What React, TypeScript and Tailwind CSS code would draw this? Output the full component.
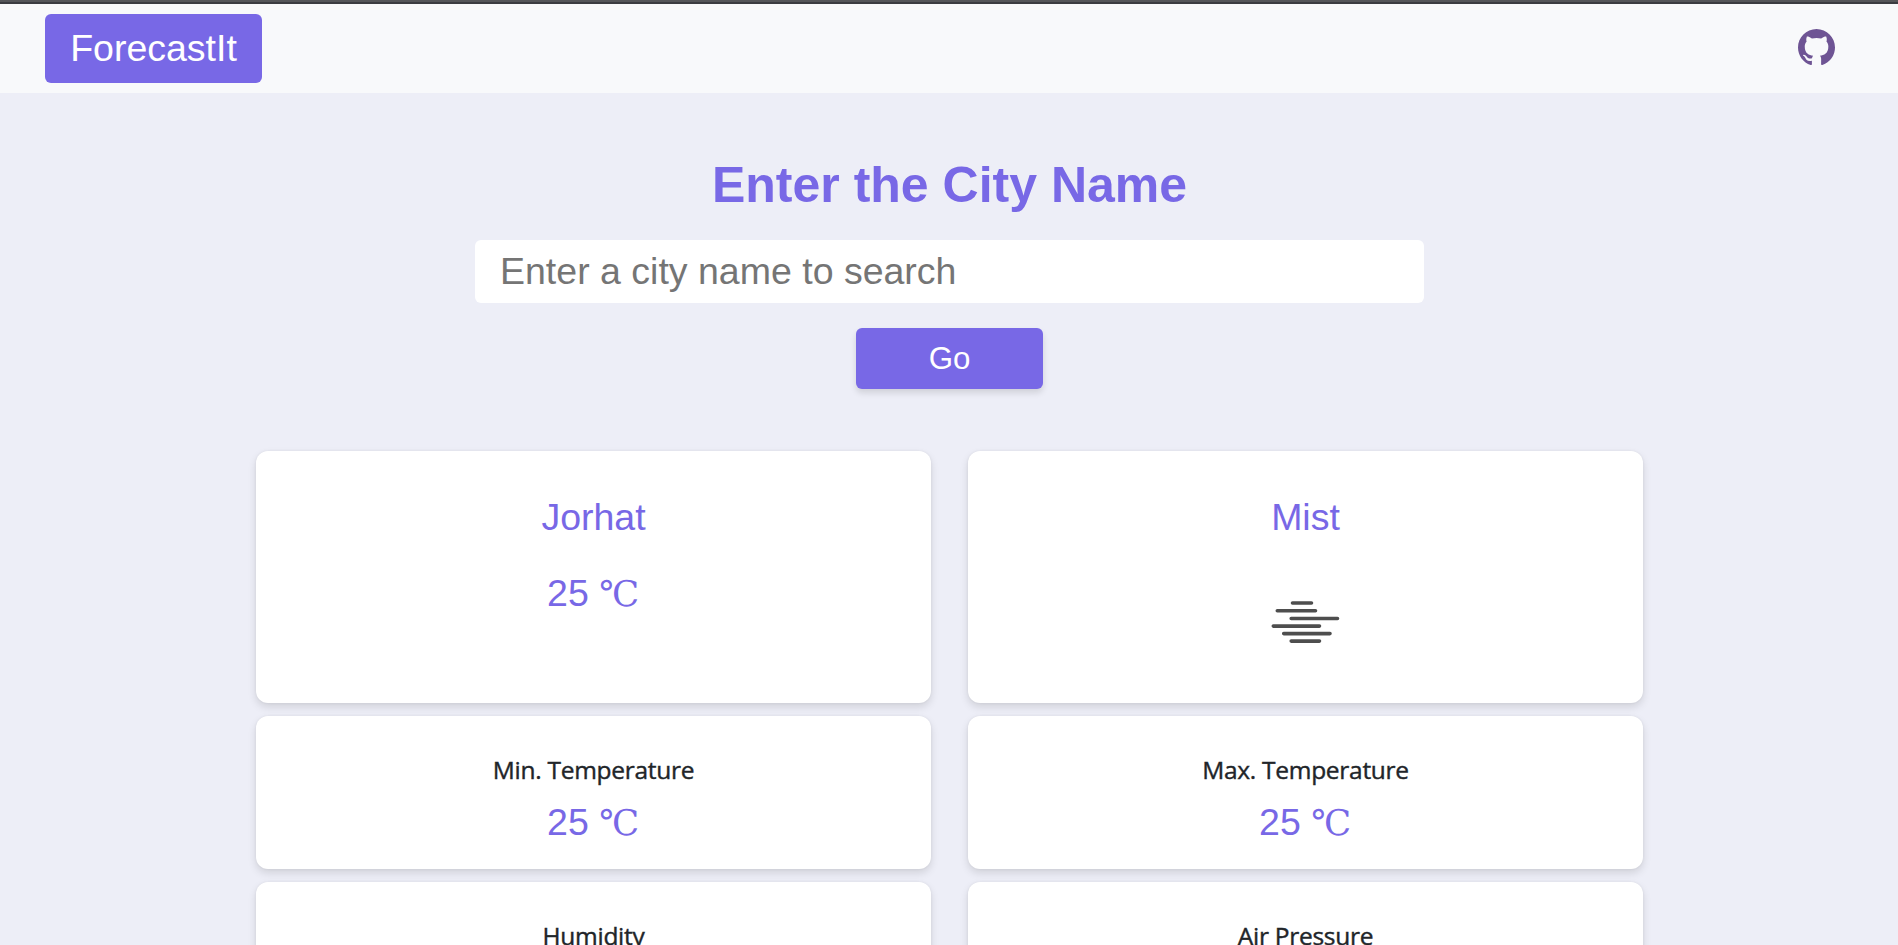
function GithubMark({ className }: { className: string }) {
  return (
    <svg viewBox="0 0 16 16" fill="currentColor" className={className}>
      <path
        fillRule="evenodd"
        d="M8 0C3.58 0 0 3.58 0 8c0 3.54 2.29 6.53 5.47 7.59.4.07.55-.17.55-.38 0-.19-.01-.82-.01-1.49-2.01.37-2.53-.49-2.69-.94-.09-.23-.48-.94-.82-1.13-.28-.15-.68-.52-.01-.53.63-.01 1.08.58 1.23.82.72 1.21 1.87.87 2.33.66.07-.52.28-.87.51-1.07-1.78-.2-3.64-.89-3.64-3.95 0-.87.31-1.59.82-2.15-.08-.2-.36-1.02.08-2.12 0 0 .67-.21 2.2.82.64-.18 1.32-.27 2-.27s1.36.09 2 .27c1.53-1.04 2.2-.82 2.2-.82.44 1.1.16 1.92.08 2.12.51.56.82 1.27.82 2.15 0 3.07-1.87 3.75-3.65 3.95.29.25.54.73.54 1.48 0 1.07-.01 1.93-.01 2.2 0 .21.15.46.55.38A8.01 8.01 0 0 0 16 8c0-4.42-3.58-8-8-8z"
      />
    </svg>
  );
}

function Temperature({ value }: { value: number }) {
  return (
    <p className="text-[37.5px] leading-[45px] text-[#7868e6]">
      {value} <span className="font-['DejaVu_Serif',serif] text-[35.5px] leading-none">℃</span>
    </p>
  );
}

function MistIcon() {
  return (
    <svg width="100" height="100" viewBox="0 0 100 100" fill="none" stroke="#4e4e4e" strokeWidth="3.6" strokeLinecap="round">
      <path d="M37.5 31H56.5M22.3 38.8H60.5M36.2 46.5H82.5M18.3 54.1H64.5M28.7 61.6H75M36.2 69.1H64.5" />
    </svg>
  );
}

function Metric({ label, children }: { label: string; children?: React.ReactNode }) {
  return (
    <div className={`${card} h-[153px] gap-[15px] pt-[39px]`}>
      <h3 className="pl-px font-['Open_Sans',sans-serif] text-[24.5px] leading-[30px] font-medium tracking-[-0.28px] text-[#212529] [-webkit-text-stroke:0.4px_#212529]">
        {label}
      </h3>
      {children}
    </div>
  );
}

const card =
  "flex flex-col items-center rounded-xl bg-white shadow-[0_4px_8px_rgba(0,0,0,0.12),0_0_3px_rgba(0,0,0,0.06)]";

export default function App() {
  return (
    <div className="h-[945px] overflow-hidden bg-[#edeef7] font-['Liberation_Sans',Arial,sans-serif]">
      <div className="h-1 border-b-2 border-[#3b3c41] bg-[#555659]" />
      <nav className="flex h-[89px] items-center justify-between bg-[#f8f9fb] pr-[63px] pl-[45px]">
        <a className="flex h-[69px] w-[217px] items-center justify-center rounded-md bg-[#7868e6] text-[37.5px] text-white">
          <span className="-mt-px">ForecastIt</span>
        </a>
        <GithubMark className="-mt-0.5 size-[37px] text-[#6e5494]" />
      </nav>
      <main className="flex flex-col items-center">
        <h1 className="mt-[62px] pl-px text-[50px] leading-[60px] font-bold text-[#7868e6]">Enter the City Name</h1>
        <input
          className="mt-[25px] h-[63px] w-[949px] rounded-md bg-white pr-[25px] pl-[25.5px] text-[37.5px] placeholder:text-[#757575]"
          placeholder="Enter a city name to search"
        />
        <button className="mt-[25px] h-[61px] w-[187px] rounded-md bg-[#7868e6] pt-0.5 pl-px text-[31.25px] text-white shadow-[0_4px_6px_rgba(0,0,0,0.12)]">
          Go
        </button>
        <section className="mt-[62px] grid w-[1387px] grid-cols-2 gap-x-[37px] gap-y-[13px]">
          <div className={`${card} h-[252px] gap-[31px] pt-[44px]`}>
            <h2 className="pl-px text-[37.5px] leading-[45px] text-[#7868e6]">Jorhat</h2>
            <Temperature value={25} />
          </div>
          <div className={`${card} h-[252px] gap-8 pt-[44px]`}>
            <h2 className="pl-px text-[37.5px] leading-[45px] text-[#7868e6]">Mist</h2>
            <MistIcon />
          </div>
          <Metric label="Min. Temperature">
            <Temperature value={25} />
          </Metric>
          <Metric label="Max. Temperature">
            <Temperature value={25} />
          </Metric>
          <Metric label="Humidity" />
          <Metric label="Air Pressure" />
        </section>
      </main>
    </div>
  );
}
